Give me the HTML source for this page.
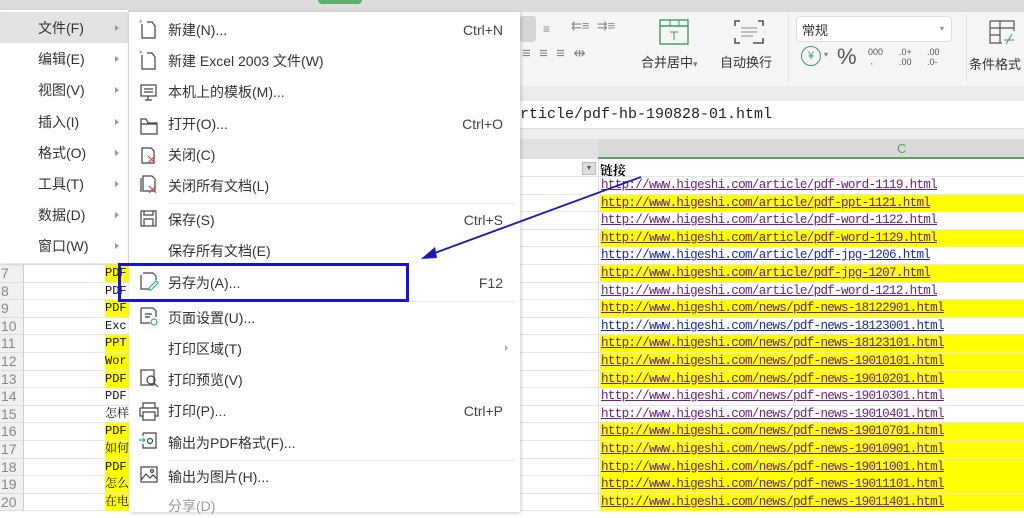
<!DOCTYPE html>
<html><head><meta charset="utf-8"><style>
*{margin:0;padding:0;box-sizing:border-box}
body{width:1024px;height:507px;overflow:hidden;position:relative;background:#fff;font-family:"Liberation Sans","Noto Sans CJK SC",sans-serif;}
.a{position:absolute}
.mi{position:absolute;left:168px;font-size:14px;color:#333;white-space:nowrap;line-height:20px}
.sc{position:absolute;right:17px;font-size:14px;color:#444;line-height:20px}
.lm{position:absolute;left:38px;font-size:14px;color:#333;line-height:20px}
.ar{position:absolute;left:115px;width:0;height:0;border-left:4px solid #999;border-top:3px solid transparent;border-bottom:3px solid transparent}
.row{position:absolute;left:0;width:1024px;height:17.6px}
.link{position:absolute;left:601px;font-family:"Liberation Mono","Noto Serif CJK SC",monospace;font-size:12.6px;letter-spacing:-0.7px;text-decoration:underline;color:#6b2080;line-height:17px;white-space:nowrap}
.rn{position:absolute;left:1px;font-size:14px;color:#888;line-height:17px}
.bc{position:absolute;left:105px;width:24px;font-family:"Liberation Mono","Noto Serif CJK SC",monospace;font-size:12px;line-height:17px;overflow:hidden;color:#111;white-space:nowrap}
svg{position:absolute}
</style></head><body>
<div class="a" style="left:0;top:0;width:1024px;height:12px;background:#dcdcdc"></div>
<div class="a" style="left:318px;top:0;width:44px;height:4px;background:#5cae6a;border-radius:0 0 6px 6px"></div>
<div class="a" style="left:0;top:12px;width:1024px;height:74px;background:#f5f5f5"></div>
<div class="a" style="left:0;top:86px;width:1024px;height:15px;background:#ebebeb"></div>
<div class="a" style="left:0;top:101px;width:1024px;height:28px;background:#fff;border-bottom:1px solid #ddd"></div>
<div class="a" style="left:0;top:129px;width:1024px;height:10px;background:#eeeeee"></div>
<div class="a" style="left:0;top:139px;width:1024px;height:20px;background:#e2e2e2"></div>
<div class="a" style="left:598px;top:139px;width:426px;height:20px;background:#d9d9d9;border-bottom:2px solid #5aa55a"></div>
<div class="a" style="left:897px;top:141px;font-size:13px;color:#5aa55a">C</div>
<div class="a" style="left:520px;top:106px;font-family:'Liberation Mono',monospace;font-size:15px;color:#222">rticle/pdf-hb-190828-01.html</div>
<div class="a" style="left:520px;top:16px;width:16px;height:26px;background:#d5d5d5;border-radius:3px"></div>
<div class="a" style="left:543px;top:22px;font-size:12px;color:#888">≡</div>
<div class="a" style="left:571px;top:18px;font-size:13px;color:#888">⇇≡ &nbsp;⇉≡</div>
<div class="a" style="left:522px;top:44px;font-size:15px;color:#888">≡ &nbsp;≡ &nbsp;≡ &nbsp;⇹</div>
<svg style="left:658px;top:18px" width="32" height="28"><rect x="2" y="2" width="28" height="24" fill="none" stroke="#3f9a5f" stroke-width="1.4"/><line x1="2" y1="8" x2="30" y2="8" stroke="#3f9a5f" stroke-width="1.4"/><line x1="12" y1="2" x2="12" y2="8" stroke="#3f9a5f"/><line x1="21" y1="2" x2="21" y2="8" stroke="#3f9a5f"/><path d="M12 14h8M16 14v8" stroke="#3f9a5f" fill="none"/></svg>
<svg style="left:733px;top:18px" width="32" height="28"><path d="M2 8V3h5M30 8V3h-5M2 20v5h5M30 20v5h-10" fill="none" stroke="#333" stroke-width="1.3"/><path d="M8 10h16M8 14h16M8 18h12" stroke="#888"/></svg>
<div class="a" style="left:641px;top:52px;font-size:13px;color:#333">合并居中<span style="font-size:9px;color:#777">▾</span></div>
<div class="a" style="left:720px;top:52px;font-size:13px;color:#333">自动换行</div>
<div class="a" style="left:796px;top:16px;width:156px;height:26px;background:#fff;border:1px solid #ddd;border-radius:4px"></div>
<div class="a" style="left:802px;top:20px;font-size:13px;color:#333">常规</div>
<div class="a" style="left:940px;top:24px;font-size:8px;color:#888">▾</div>
<div class="a" style="left:801px;top:46px;width:20px;height:20px;border:1.3px solid #3f9a5f;border-radius:50%;font-size:11px;color:#3f9a5f;text-align:center;line-height:18px">¥</div>
<div class="a" style="left:824px;top:50px;font-size:8px;color:#777">▾</div>
<div class="a" style="left:837px;top:44px;font-size:22px;color:#555">%</div>
<div class="a" style="left:868px;top:48px;font-size:9px;color:#555;line-height:9px">000<br>&nbsp;,</div>
<div class="a" style="left:899px;top:47px;font-size:9px;color:#555;line-height:10px">.0+<br>.00</div>
<div class="a" style="left:927px;top:47px;font-size:9px;color:#555;line-height:10px">.00<br>.0-</div>
<div class="a" style="left:966px;top:14px;width:1px;height:68px;background:#e2e2e2"></div>
<div class="a" style="left:788px;top:14px;width:1px;height:68px;background:#e2e2e2"></div>
<svg style="left:988px;top:18px" width="30" height="28"><path d="M2 3h24v10M2 3v22h12M2 10h24M2 17h10M12 3v22" fill="none" stroke="#555" stroke-width="1.2"/><path d="M16 22h10M18 26l6-10" stroke="#3f9a5f"/></svg>
<div class="a" style="left:969px;top:54px;font-size:13px;color:#333;white-space:nowrap">条件格式</div>

<div class="a" style="left:0;top:159px;width:1024px;height:18px;border-bottom:1px solid #e3e3e3"></div>
<div class="a" style="left:582px;top:162px;width:14px;height:13px;background:#ddd;border:1px solid #bbb;font-size:7px;text-align:center;color:#555;line-height:11px">▼</div>
<div class="a" style="left:600px;top:160px;font-size:13px;font-weight:bold;color:#000;font-family:'Liberation Serif','Noto Serif CJK SC',serif">链接</div>

<div id="rows"></div>
<div class="a" style="left:598px;top:159px;width:1px;height:348px;background:#e3e3e3"></div>
<script>
(function(){
var links=["article/pdf-word-1119","article/pdf-ppt-1121","article/pdf-word-1122","article/pdf-word-1129","article/pdf-jpg-1206","article/pdf-jpg-1207","article/pdf-word-1212","news/pdf-news-18122901","news/pdf-news-18123001","news/pdf-news-18123101","news/pdf-news-19010101","news/pdf-news-19010201","news/pdf-news-19010301","news/pdf-news-19010401","news/pdf-news-19010701","news/pdf-news-19010901","news/pdf-news-19011001","news/pdf-news-19011101","news/pdf-news-19011401"];
var yel=[0,1,0,1,0,1,0,1,0,1,1,1,0,0,1,1,1,1,1];
var bt=["PDF","PDF","PDF","Exc","PPT","Wor","PDF","PDF","怎样","PDF","如何","PDF","怎么","在电"];
var h="";
for(var i=0;i<19;i++){var r=i+2,ty=(177+i*17.6).toFixed(1);
h+='<div class="row" style="top:'+ty+'px;border-bottom:1px solid #e6e6e6"></div>';
if(yel[i])h+='<div class="a" style="left:600px;top:'+ty+'px;width:424px;height:17px;background:#ffff00"></div>';
var col=(i==4||i==8)?"#1a2a9a":"#6b2080";
h+='<div class="link" style="top:'+ty+'px;color:'+col+'">http://www.higeshi.com/'+links[i]+'.html</div>';
if(r>=7){h+='<div class="a" style="left:0;top:'+ty+'px;width:24px;height:17.6px;background:#f0f0f0;border-bottom:1px solid #ddd;border-right:1px solid #ccc"></div><div class="rn" style="top:'+ty+'px">'+r+'</div>';
if(yel[i])h+='<div class="a" style="left:105px;top:'+ty+'px;width:24px;height:17px;background:#ffff00"></div>';
h+='<div class="bc" style="top:'+ty+'px">'+bt[r-7]+'</div>';}
}
document.getElementById("rows").innerHTML=h;
})();
</script>

<div class="a" style="left:0;top:10px;width:129px;height:253px;background:#fff;border-right:1px solid #e0e0e0;box-shadow:1px 1px 3px rgba(0,0,0,.15)"></div>
<div class="a" style="left:0;top:12px;width:128px;height:31px;background:#e3e3e3"></div>
<div class="lm" style="top:18px">文件(F)</div><div class="ar" style="top:25px"></div>
<div class="lm" style="top:49px">编辑(E)</div><div class="ar" style="top:56px"></div>
<div class="lm" style="top:80px">视图(V)</div><div class="ar" style="top:87px"></div>
<div class="lm" style="top:112px">插入(I)</div><div class="ar" style="top:119px"></div>
<div class="lm" style="top:143px">格式(O)</div><div class="ar" style="top:150px"></div>
<div class="lm" style="top:174px">工具(T)</div><div class="ar" style="top:181px"></div>
<div class="lm" style="top:205px">数据(D)</div><div class="ar" style="top:212px"></div>
<div class="lm" style="top:236px">窗口(W)</div><div class="ar" style="top:243px"></div>

<div class="a" style="left:129px;top:12px;width:391px;height:500px;background:#fff;box-shadow:1px 1px 4px rgba(0,0,0,.2)"></div>
<div class="a" style="left:168px;top:203px;width:347px;height:1px;background:#eaeaea"></div>
<div class="a" style="left:168px;top:301px;width:347px;height:1px;background:#eaeaea"></div>
<div class="a" style="left:168px;top:460px;width:347px;height:1px;background:#eaeaea"></div>
<div style="position:absolute;left:129px;top:0;width:391px;height:507px">
<div class="mi" style="top:20px;left:39px">新建(N)...</div><div class="sc" style="top:20px">Ctrl+N</div>
<div class="mi" style="top:51px;left:39px">新建 Excel 2003 文件(W)</div>
<div class="mi" style="top:82px;left:39px">本机上的模板(M)...</div>
<div class="mi" style="top:114px;left:39px">打开(O)...</div><div class="sc" style="top:114px">Ctrl+O</div>
<div class="mi" style="top:145px;left:39px">关闭(C)</div>
<div class="mi" style="top:176px;left:39px">关闭所有文档(L)</div>
<div class="mi" style="top:210px;left:39px">保存(S)</div><div class="sc" style="top:210px">Ctrl+S</div>
<div class="mi" style="top:241px;left:39px">保存所有文档(E)</div>
<div class="mi" style="top:273px;left:39px">另存为(A)...</div><div class="sc" style="top:273px">F12</div>
<div class="mi" style="top:308px;left:39px">页面设置(U)...</div>
<div class="mi" style="top:339px;left:39px">打印区域(T)</div><div class="a" style="left:376px;top:345px;border-left:3px solid #aaa;border-top:3px solid transparent;border-bottom:3px solid transparent"></div>
<div class="mi" style="top:370px;left:39px">打印预览(V)</div>
<div class="mi" style="top:401px;left:39px">打印(P)...</div><div class="sc" style="top:401px">Ctrl+P</div>
<div class="mi" style="top:433px;left:39px">输出为PDF格式(F)...</div>
<div class="mi" style="top:467px;left:39px">输出为图片(H)...</div>
<div class="mi" style="top:496px;left:39px;color:#999">分享(D)</div>
</div>
<svg style="left:138px;top:18px" width="24" height="500" fill="none" stroke="#444" stroke-width="1.2">
<path d="M4 6v14h13V8l-3-4H9"/><text x="1" y="8" font-size="9" fill="#3a9" stroke="none">*</text>
<path d="M4 37v14h13V39l-3-4H9"/><text x="1" y="39" font-size="9" fill="#3a9" stroke="none">*</text>
<rect x="3" y="67" width="15" height="11"/><path d="M6 71h9M6 74h9M10 78v4M7 82h7"/>
<path d="M3 101v15h16v-11H10l-2-4z M3 106h16"/>
<path d="M4 130v15h12v-12l-3-3z"/><path d="M10 138l7 7M17 138l-7 7" stroke="#e04040"/>
<path d="M3 160v14M5 158h9l3 3v12H5z"/><path d="M11 168l7 7M18 168l-7 7" stroke="#e04040"/>
<rect x="3" y="193" width="15" height="15"/><path d="M6 193v4h9v-4M6 208v-7h9v7"/>
<path d="M3 257v14h8M5 255h10l3 3v4"/><path d="M11 270l7-7 2 2-7 7h-2z" stroke="#3a9"/>
<path d="M3 290v15h9M3 290h12l3 3v6"/><circle cx="16" cy="304" r="3" stroke="#3a9"/><path d="M7 296h7M7 299h5"/>
<rect x="3" y="352" width="13" height="15"/><circle cx="13" cy="362" r="4"/><path d="M16 365l4 4"/>
<path d="M5 390v-5h12v5M2 390h18v8h-3M5 398h-3v-8M5 394h12v8H5z"/>
<path d="M5 415h13v15H5v-4M5 418v-3"/><path d="M1 422h6M5 420l2 2-2 2" stroke="#3a9"/><circle cx="12" cy="423" r="2.5"/>
<rect x="3" y="449" width="16" height="15"/><path d="M3 462l5-6 4 4 3-3 4 4"/><circle cx="14" cy="453" r="1.5"/>
</svg>

<div class="a" style="left:118px;top:263px;width:291px;height:39px;border:3px solid #1515d0"></div>
<svg style="left:0;top:0" width="1024" height="507"><line x1="641" y1="177" x2="432" y2="254" stroke="#1a1ab8" stroke-width="1.8"/><path d="M421 259l14-12 2 11z" fill="#1a1ab8"/></svg>
</body></html>
